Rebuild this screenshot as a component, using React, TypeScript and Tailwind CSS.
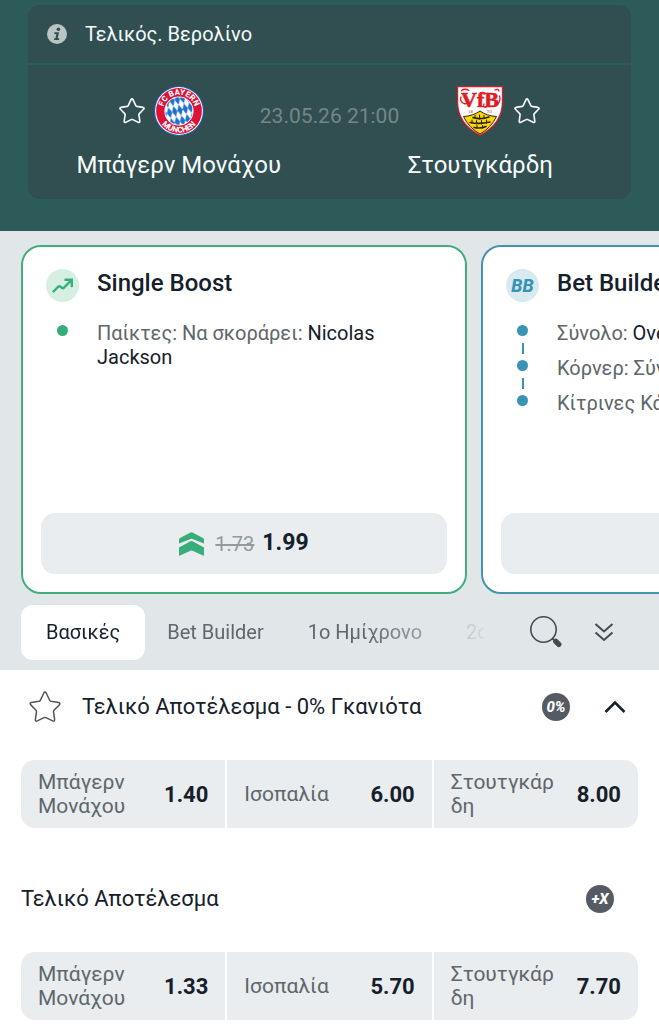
import { ReactNode } from "react";

const BAYERN = "Μπάγερν Μονάχου";
const STUTTGART = "Στουτγκάρδη";

const markets = [
  {
    id: "zero-margin",
    title: "Τελικό Αποτέλεσμα - 0% Γκανιότα",
    badge: "0%",
    favourite: true,
    odds: [
      { name: BAYERN, value: "1.40" },
      { name: "Ισοπαλία", value: "6.00" },
      { name: STUTTGART, value: "8.00" },
    ],
  },
  {
    id: "full-time",
    title: "Τελικό Αποτέλεσμα",
    badge: "+X",
    favourite: false,
    odds: [
      { name: BAYERN, value: "1.33" },
      { name: "Ισοπαλία", value: "5.70" },
      { name: STUTTGART, value: "7.70" },
    ],
  },
];

const tabs = ["Bet Builder", "1ο Ημίχρονο", "2ο"];

const Star = ({ className }: { className: string }) => (
  <svg viewBox="0 0 32 32" fill="none" strokeLinejoin="round" className={className}>
    <path
      stroke="currentColor"
      d="M14.7 2.200Q16 0 17.300 2.200L20.700 9.300Q21.100 10.100 22 10.300L29.600 11.600Q31.900 12.100 30.200 13.900L25 19.200Q24.400 19.800 24.500 20.700L25.600 28.300Q25.800 30.900 23.600 29.800L17 26.600Q16 26.200 15 26.600L8.400 29.800Q6.200 30.900 6.400 28.300L7.500 20.700Q7.600 19.800 7 19.200L1.800 13.900Q.1 12.100 2.400 11.600L10 10.300Q10.900 10.100 11.300 9.300Z"
    />
  </svg>
);

const BayernLogo = () => (
  <svg viewBox="0 0 50 50" className="size-[50px]" role="img" aria-label="FC Bayern München">
    <defs>
      <pattern
        id="lozenge"
        width="5.4"
        height="11"
        patternUnits="userSpaceOnUse"
        patternTransform="translate(1 2) rotate(-14)"
      >
        <rect width="5.4" height="11" fill="#fff" />
        <path d="M2.700 0L5.400 5.500L2.700 11L0 5.500Z" fill="#1f6fd0" />
      </pattern>
      <path id="bayern-top" d="M8.800 25a16.200 16.200 0 0 1 32.400 0" />
      <path id="bayern-bottom" d="M3.400 25a21.600 21.600 0 0 0 43.200 0" />
    </defs>
    <circle cx="25" cy="25" r="25" fill="#1f63b8" />
    <circle cx="25" cy="25" r="23.9" fill="#fff" />
    <circle cx="25" cy="25" r="22.9" fill="#dc1237" />
    <circle cx="25" cy="25" r="14.6" fill="#fff" />
    <circle cx="25" cy="25" r="13.7" fill="url(#lozenge)" />
    <g fill="#fff" fontFamily="Roboto, sans-serif" fontWeight="800" textAnchor="middle">
      <text fontSize="8">
        <textPath href="#bayern-top" startOffset="50%">
          FC BAYERN
        </textPath>
      </text>
      <text fontSize="8">
        <textPath href="#bayern-bottom" startOffset="50%">
          MÜNCHEN
        </textPath>
      </text>
    </g>
  </svg>
);

const StuttgartLogo = () => (
  <svg viewBox="0 0 46 50" className="h-[50px] w-[46px]" role="img" aria-label="VfB Stuttgart">
    <path d="M0 0H46V16Q46 38 23 50Q0 38 0 16Z" fill="#e21a22" />
    <path d="M1.200 1.200H44.800V16Q44.800 37 23 48.600Q1.200 37 1.200 16Z" fill="#fff" />
    <path
      d="M6.500 30.500Q16 30 23 25Q30 30 39.500 30.500Q34.500 41.500 23 48Q11.500 41.500 6.500 30.500Z"
      fill="#fbd505"
      stroke="#2b2512"
      strokeWidth="1"
    />
    {/* Antlers */}
    <g stroke="#2b2512" strokeWidth="1.6" fill="none" strokeLinecap="round">
      <path d="M16 31.500Q24 34 32 31M13 36.500Q23 38.500 33 36M17 41.500Q24 43 29 40.500" />
      <path
        strokeWidth="1.100"
        d="M18 29.500V32M22.500 29V33M27 29.500V32M15 34V37M19.500 34.500V38M24.500 34.500V38M29.500 34V37M20 39.500V42M25.500 39.500V42"
      />
    </g>
    <g fill="#e21a22" textAnchor="middle" fontFamily="Liberation Serif, serif">
      <text x="23" y="20.5" fontSize="22" fontWeight="700" stroke="#e21a22" strokeWidth=".6">
        VfB
      </text>
      <text x="13.500" y="26.800" fontSize="5">18</text>
      <text x="32.500" y="26.800" fontSize="5">93</text>
    </g>
    <g stroke="#e21a22" strokeWidth="1.300" fill="none" strokeLinecap="round">
      <path d="M4 11Q2.500 15 6 17Q9 19 11 16M4.500 4.500Q8 2 12 4.500M27 18Q25.500 21.500 29 21M38 4Q41 2.500 42 5M42.500 10Q44 14 41 18" />
    </g>
  </svg>
);

const Badge = ({ children }: { children: ReactNode }) => (
  <span className="flex size-7 shrink-0 items-center justify-center rounded-full bg-[#555b63] text-[15px] leading-none font-extrabold text-white italic">
    {children}
  </span>
);

const BoostCard = ({
  title,
  icon,
  className,
  children,
  price,
}: {
  title: string;
  icon: ReactNode;
  className: string;
  children: ReactNode;
  price?: ReactNode;
}) => (
  <article
    className={`flex h-[349px] w-[446px] shrink-0 flex-col rounded-[20px] border-2 bg-white p-[18px] ${className}`}
  >
    <div className="flex gap-[18px] px-[5px] pt-1">
      {icon}
      <h2 className="text-[24px] leading-7 font-medium whitespace-nowrap text-[#15202b]">{title}</h2>
    </div>
    <ul className="mt-[19px] flex flex-col gap-[11px] px-[5px] text-[20px] leading-6 text-[#60666b]">
      {children}
    </ul>
    <button
      aria-label={price ? undefined : title}
      className="mt-auto flex h-[61px] items-center justify-center rounded-[14px] bg-[#e9edf0]"
    >
      {price}
    </button>
  </article>
);

const Leg = ({ children, dot, line }: { children: ReactNode; dot: string; line?: boolean }) => (
  <li className="flex gap-[18px]">
    <span className="flex w-[33px] shrink-0 flex-col items-center pt-1">
      <span className={`size-[11px] rounded-full ${dot}`} />
      {line && <span className="mt-[7px] -mb-3 h-[11px] w-[2px] bg-[#3894b4]" />}
    </span>
    <p>{children}</p>
  </li>
);

const MatchHeader = () => (
  <header className="bg-[#2d5b59] px-[28px] pt-[5px] pb-8 text-[#f4fbfb]">
    <div className="flex h-[58px] items-center gap-[18px] rounded-t-xl bg-[#314e50] pl-[19px]">
      <svg viewBox="0 0 20 20" className="size-5">
        <circle cx="10" cy="10" r="10" fill="#b9c4c4" />
        <circle cx="11.400" cy="5.200" r="1.800" fill="#314e50" />
        <path
          d="M7.500 8.200H12L10.700 14.200H12.300L11.900 15.900H7L7.400 14.200H8.400L9.300 9.900H7.200Z"
          fill="#314e50"
        />
      </svg>
      <p className="text-[20px] leading-6">Τελικός. Βερολίνο</p>
    </div>
    <div className="mt-[2px] grid grid-cols-2 rounded-b-xl bg-[#314e50] pt-[21px] pb-[18px]">
      <div className="col-start-1 row-start-1 flex flex-col items-center gap-[13px]">
        <div className="flex items-center gap-[9px] pr-[35px]">
          <button aria-label={`Αγαπημένα ${BAYERN}`}>
            <Star className="size-[26px] stroke-2" />
          </button>
          <BayernLogo />
        </div>
        <p className="text-[24px] leading-8">{BAYERN}</p>
      </div>
      <div className="col-start-2 row-start-1 flex flex-col items-center gap-[13px]">
        <div className="flex items-center gap-[11px] pl-[37px]">
          <StuttgartLogo />
          <button aria-label={`Αγαπημένα ${STUTTGART}`}>
            <Star className="size-[26px] stroke-2" />
          </button>
        </div>
        <p className="text-[24px] leading-8">{STUTTGART}</p>
      </div>
      <time className="col-span-2 col-start-1 row-start-1 justify-self-center pt-[18px] text-[21px] leading-6 text-[#748787]">
        23.05.26 21:00
      </time>
    </div>
  </header>
);

const Boosts = () => (
  <section className="flex gap-[14px] overflow-hidden pl-[21px]">
    <BoostCard
      title="Single Boost"
      className="border-[#43ae7d]"
      icon={
        <svg viewBox="0 0 33 33" className="size-[33px] shrink-0" fill="none">
          <circle cx="16.500" cy="16.500" r="16.500" fill="#d5efe2" />
          <path
            d="M7.500 22.500L12.500 17.500Q13.500 16.800 14.500 17.700L16 19Q17 19.600 18 18.600L25 11.500M19.500 10.700H25.800V17"
            stroke="#37ad79"
            strokeWidth="2.400"
            strokeLinecap="round"
          />
        </svg>
      }
      price={
        <>
          <svg viewBox="0 0 25 24" className="mr-[11px] h-6 w-[25px]" fill="#37ad79">
            <path d="M0 7.500Q0 6.600 1 6L11.500.4Q12.500 0 13.500.4L24 6Q25 6.600 25 7.500V11.500L13.500 7Q12.500 6.600 11.500 7L0 11.500Z" />
            <path d="M0 15.500L11.500 9.300Q12.500 8.900 13.500 9.300L25 15.500V23Q25 24 24 23.600L13.500 18.700Q12.500 18.300 11.500 18.700L1 23.600Q0 24 0 23Z" />
          </svg>
          <s className="mr-2 text-[20px] text-[#94999d]">1.73</s>
          <strong className="text-[23px] font-bold text-[#15202b]">1.99</strong>
        </>
      }
    >
      <Leg dot="bg-[#37ad79]">
        Παίκτες: Να σκοράρει: <span className="text-[#15202b]">Nicolas Jackson</span>
      </Leg>
    </BoostCard>
    <BoostCard
      title="Bet Builder"
      className="border-[#4793ae]"
      icon={
        <span className="flex size-[33px] shrink-0 items-center justify-center rounded-full bg-[#d8e9ef] text-[18px] font-extrabold text-[#3894b4] italic">
          BB
        </span>
      }
    >
      <Leg dot="bg-[#3894b4]" line>
        Σύνολο: <span className="text-[#15202b]">Over</span>
      </Leg>
      <Leg dot="bg-[#3894b4]" line>
        Κόρνερ: Σύνολο
      </Leg>
      <Leg dot="bg-[#3894b4]">Κίτρινες Κάρτες</Leg>
    </BoostCard>
  </section>
);

const MarketTabs = () => (
  <nav className="flex h-[76px] items-center pr-[45px] pl-[21px]">
    <div className="flex min-w-0 flex-1 overflow-hidden mask-[linear-gradient(to_right,#000_calc(100%-120px),transparent_calc(100%+12px))] text-[20px] whitespace-nowrap text-[#60666b]">
      <button className="h-[55px] shrink-0 rounded-xl bg-white px-[25px] text-[#15202b]">Βασικές</button>
      {tabs.map((tab) => (
        <button key={tab} className="h-[55px] shrink-0 px-[22px]">
          {tab}
        </button>
      ))}
    </div>
    <div className="flex shrink-0 items-center gap-8 pl-[46px] text-[#444b50]">
      <button aria-label="Αναζήτηση">
        <svg viewBox="0 0 32 32" className="size-8" fill="none" stroke="currentColor">
          <circle cx="13.500" cy="13.500" r="12.700" strokeWidth="1.600" />
          <path d="M22.500 22.500L24 24" strokeWidth="2" />
          <path d="M25.800 25.300L28.800 28.300" strokeWidth="5.400" strokeLinecap="round" />
        </svg>
      </button>
      <button aria-label="Εμφάνιση όλων">
        <svg viewBox="0 0 20 20" className="size-5" fill="none" stroke="currentColor" strokeWidth="2">
          <path d="M1.500 2L10 9.500L18.500 2M1.500 10.500L10 18L18.500 10.500" />
        </svg>
      </button>
    </div>
  </nav>
);

const App = () => {
  return (
    <div className="overflow-hidden bg-white font-['Roboto','Noto_Sans',sans-serif] text-[#15202b]">
      <MatchHeader />

      <div className="bg-[#e1e7e9] pt-[14px]">
        <Boosts />
        <MarketTabs />
      </div>

      {/* Markets */}
      <main className="px-[21px]">
        {markets.map((market) => (
          <section key={market.id} className="pb-[34px]">
            <div
              className={`flex h-[74px] items-center ${market.favourite ? "pr-3" : "pr-6"}`}
            >
              {market.favourite && (
                <button aria-label="Αγαπημένη αγορά" className="mr-[21px] ml-2">
                  <Star className="size-8 stroke-[1.5px] text-[#50565b]" />
                </button>
              )}
              <h3 className="flex-1 text-[22px] leading-7">{market.title}</h3>
              <Badge>{market.badge}</Badge>
              {market.favourite && (
                <button aria-label="Σύμπτυξη" className="ml-[34px]">
                  <svg viewBox="0 0 22 22" className="size-[22px]" fill="none">
                    <path d="M1.500 16L11 6.500L20.500 16" stroke="#15202b" strokeWidth="2.500" />
                  </svg>
                </button>
              )}
            </div>
            <div className="mt-4 grid grid-cols-3 gap-[2px] overflow-hidden rounded-[14px]">
              {market.odds.map((odd) => (
                <button
                  key={odd.name}
                  className="flex h-[68px] items-center justify-between bg-[#e9edf0] px-[17px] text-left"
                >
                  <span className="w-[108px] text-[21px] leading-6 wrap-anywhere text-[#60666b]">
                    {odd.name}
                  </span>
                  <strong className="text-[22px] font-bold">{odd.value}</strong>
                </button>
              ))}
            </div>
          </section>
        ))}
      </main>
    </div>
  );
};

export default App;
